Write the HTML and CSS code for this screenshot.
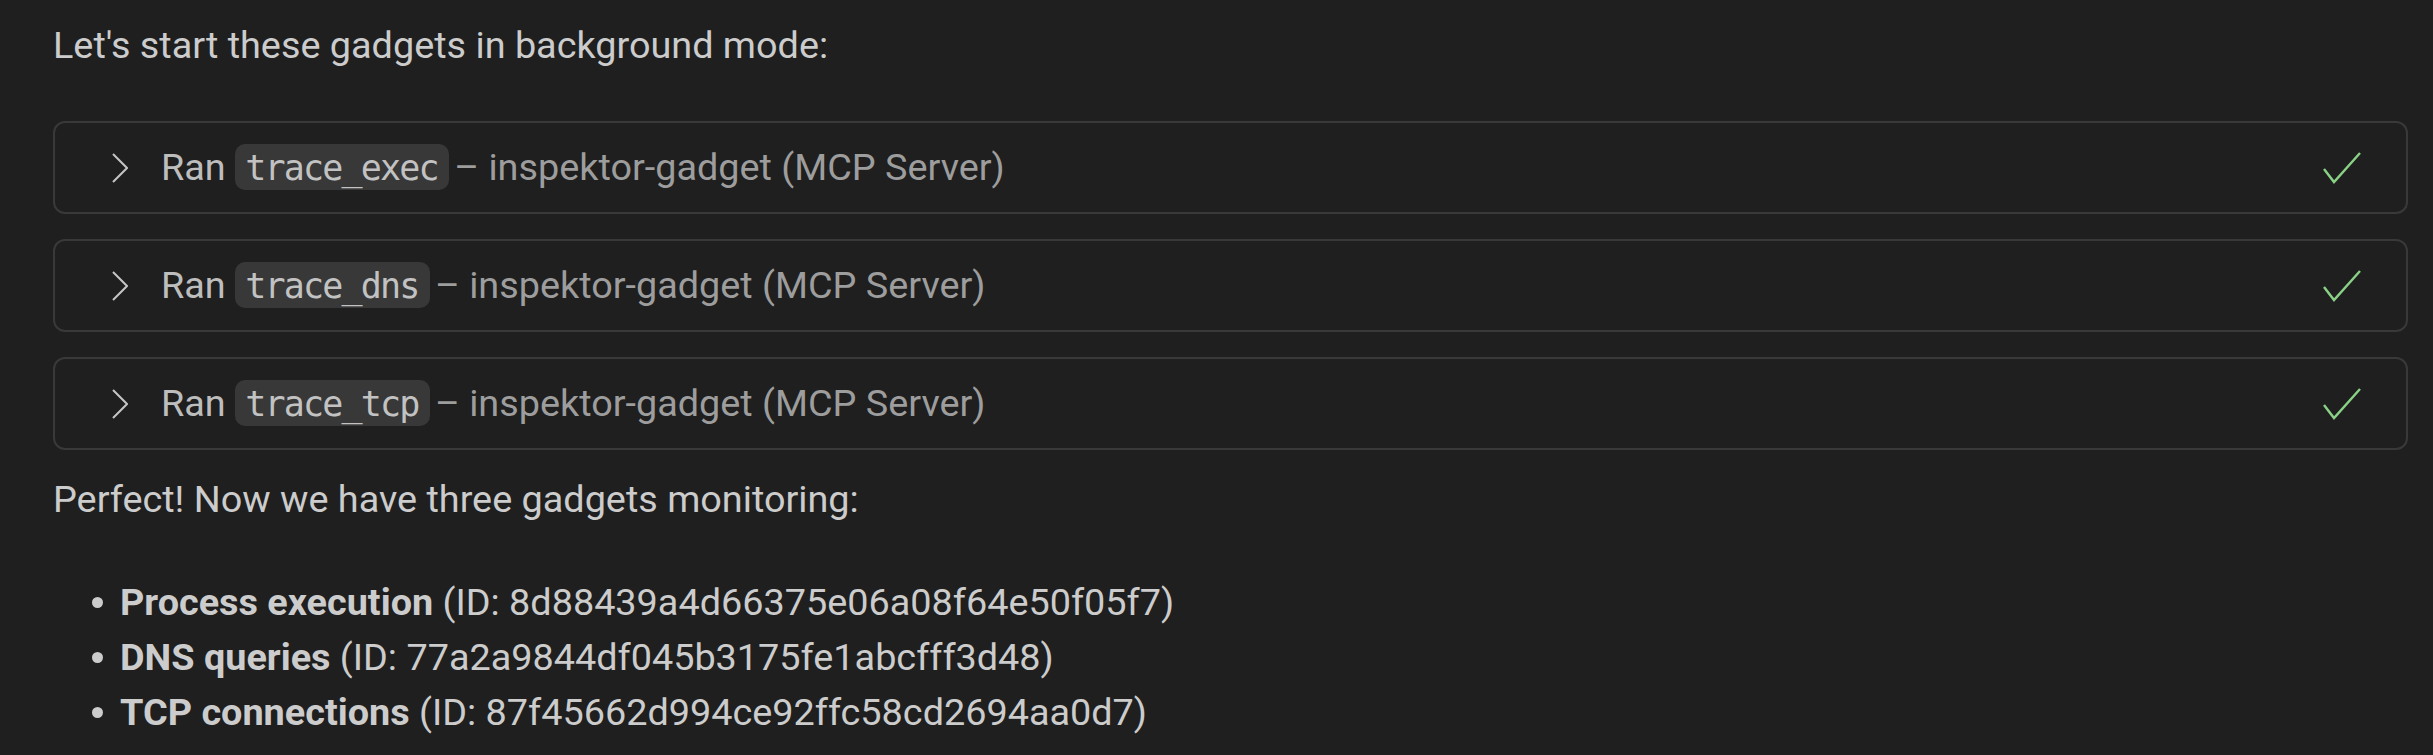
FILE: index.html
```html
<!DOCTYPE html>
<html>
<head>
<meta charset="utf-8">
<link rel="stylesheet" href="styles.css">
</head>
<body>
<div class="chat">
  <p class="msg first">Let's start these gadgets in background mode:</p>
  <div class="tools">
    <div class="tool">
      <svg class="chev" width="16" height="30" viewBox="0 0 16 30"><polyline points="1,1 15,15 1,29" fill="none" stroke="#c5c5c5" stroke-width="2"/></svg>
      <span class="label"><span class="ran">Ran</span> <code>trace_exec</code> <span class="desc">– inspektor-gadget (MCP Server)</span></span>
      <svg class="check" width="38" height="32" viewBox="0 0 38 32"><polyline points="1,17 11,30 37,1" fill="none" stroke="#89d185" stroke-width="2.4"/></svg>
    </div>
    <div class="tool">
      <svg class="chev" width="16" height="30" viewBox="0 0 16 30"><polyline points="1,1 15,15 1,29" fill="none" stroke="#c5c5c5" stroke-width="2"/></svg>
      <span class="label"><span class="ran">Ran</span> <code>trace_dns</code> <span class="desc">– inspektor-gadget (MCP Server)</span></span>
      <svg class="check" width="38" height="32" viewBox="0 0 38 32"><polyline points="1,17 11,30 37,1" fill="none" stroke="#89d185" stroke-width="2.4"/></svg>
    </div>
    <div class="tool">
      <svg class="chev" width="16" height="30" viewBox="0 0 16 30"><polyline points="1,1 15,15 1,29" fill="none" stroke="#c5c5c5" stroke-width="2"/></svg>
      <span class="label"><span class="ran">Ran</span> <code>trace_tcp</code> <span class="desc">– inspektor-gadget (MCP Server)</span></span>
      <svg class="check" width="38" height="32" viewBox="0 0 38 32"><polyline points="1,17 11,30 37,1" fill="none" stroke="#89d185" stroke-width="2.4"/></svg>
    </div>
  </div>
  <p class="msg second">Perfect! Now we have three gadgets monitoring:</p>
  <ul class="list">
    <li><strong>Process execution</strong> (ID: 8d88439a4d66375e06a08f64e50f05f7)</li>
    <li><strong>DNS queries</strong> (ID: 77a2a9844df045b3175fe1abcfff3d48)</li>
    <li><strong>TCP connections</strong> (ID: 87f45662d994ce92ffc58cd2694aa0d7)</li>
  </ul>
</div>
</body>
</html>
```
FILE: styles.css
```css
html, body {
  margin: 0;
  padding: 0;
  background: #1f1f1f;
}
body {
  font-family: Roboto, "Noto Sans", sans-serif;
  font-size: 37.8px;
  line-height: 55px;
  color: #cccccc;
}
.chat {
  padding: 0 25px 0 53px;
}
.msg {
  margin: 0;
}
.msg.first {
  padding-top: 18px;
}
.msg.second {
  margin-top: 22px;
}
.tools {
  display: flex;
  flex-direction: column;
  gap: 25px;
  margin-top: 48px;
}
.tool {
  display: flex;
  align-items: center;
  height: 89px;
  border: 2px solid #393939;
  border-radius: 12px;
  padding: 0 45px 0 57px;
}
.chev {
  flex: none;
}
.label {
  flex: 1;
  margin-left: 33px;
  white-space: nowrap;
  line-height: 45px;
}
.ran {
  color: #bdbdbd;
}
.desc {
  color: #9d9d9d;
  margin-left: -4px;
}
code {
  font-family: "DejaVu Sans Mono", "Liberation Mono", monospace;
  font-size: 35px;
  letter-spacing: -1.8px;
  color: #c2c2c2;
  background: #383838;
  border-radius: 10px;
  padding: 4px 11px 2px 10px;
}
.check {
  flex: none;
}
.list {
  margin: 48px 0 0 0;
  padding: 0 0 0 67px;
  list-style: none;
}
.list li::before {
  content: "";
  display: inline-block;
  width: 11px;
  height: 11px;
  border-radius: 50%;
  background: #cccccc;
  margin-left: -28.5px;
  margin-right: 17.5px;
  vertical-align: 7px;
}
strong {
  font-weight: 700;
}
```
